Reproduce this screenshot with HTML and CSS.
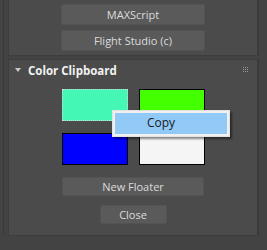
FILE: index.html
```html
<!DOCTYPE html>
<html lang="en">
<head>
    <meta charset="UTF-8">
    <title>Color Clipboard</title>
    <link rel="stylesheet" href="styles.css">
</head>
<body>
    <div class="frame">
        <div class="rollout first">
            <button class="btn wide">MAXScript</button>
            <button class="btn wide">Flight Studio (c)</button>
        </div>

        <div class="rollout">
            <div class="rollout-head">
                <span class="arrow"></span>
                <span class="title">Color Clipboard</span>
                <svg class="grip" width="6" height="6" viewBox="0 0 6 6">
                    <rect x="0" y="0" width="1" height="1"/><rect x="2" y="0" width="1" height="1"/><rect x="4" y="0" width="1" height="1"/>
                    <rect x="0" y="2" width="1" height="1"/><rect x="2" y="2" width="1" height="1"/><rect x="4" y="2" width="1" height="1"/>
                    <rect x="0" y="4" width="1" height="1"/><rect x="2" y="4" width="1" height="1"/><rect x="4" y="4" width="1" height="1"/>
                </svg>
            </div>
            <div class="swatches">
                <div class="swatch focused" style="background:#44f7b4"></div>
                <div class="swatch" style="background:#44ff00"></div>
                <div class="swatch" style="background:#0000ff"></div>
                <div class="swatch" style="background:#f5f5f5"></div>
            </div>
            <button class="btn floater">New Floater</button>
            <button class="btn close">Close</button>
        </div>
    </div>

    <div class="menu">
        <div class="menu-item">Copy</div>
    </div>
</body>
</html>
```

FILE: styles.css
```css
body {
    margin: 0;
    background: #434343;
    font-family: "Open Sans", "Noto Sans", sans-serif;
    font-size: 11px;
    color: #dcdcdc;
    height: 250px;
    overflow: hidden;
}
.frame {
    margin-left: 3px;
    border-left: 1px solid #393939;
    padding: 0 4px 0 4px;
    width: 251px;
}
.rollout {
    background: #4b4b4b;
    border: 1px solid #3d3d3d;
    border-right: 2px solid #3a3a3a;
    display: flex;
    flex-direction: column;
    align-items: center;
    margin-top: 3px;
    padding-bottom: 11px;
}
.rollout.first {
    margin-top: 0;
    border-top: none;
    padding-top: 4px;
    padding-bottom: 4px;
}
.btn {
    font-family: inherit;
    font-size: 11px;
    color: #dcdcdc;
    background: #5a5a5a;
    border: 1px solid #535353;
    border-radius: 2px;
    padding: 0;
    height: 21px;
    box-sizing: border-box;
}
.btn.wide {
    width: 144px;
    margin-bottom: 5px;
}
.btn.wide:last-child {
    margin-bottom: 0;
}
.rollout-head {
    align-self: stretch;
    display: flex;
    align-items: center;
    height: 20px;
    padding: 0 8px 0 6px;
}
.arrow {
    width: 0;
    height: 0;
    border-left: 3px solid transparent;
    border-right: 3px solid transparent;
    border-top: 4px solid #c8c8c8;
    margin-right: 7px;
}
.title {
    font-weight: bold;
    font-size: 11.5px;
    color: #f2f2f2;
    flex: 1;
}
.grip {
    fill: #9a9a9a;
}
.swatches {
    display: grid;
    grid-template-columns: 66px 66px;
    grid-auto-rows: 32px;
    column-gap: 11px;
    row-gap: 12px;
    margin-top: 9px;
    margin-left: 1px;
}
.swatch {
    border: 1px solid #000;
}
.swatch.focused {
    border: 1px dotted #d8d8d8;
}
.btn.floater {
    width: 142px;
    height: 19px;
    margin-top: 12px;
}
.btn.close {
    width: 67px;
    height: 19px;
    margin-top: 9px;
}
.menu {
    position: absolute;
    left: 112px;
    top: 110px;
    width: 112px;
    height: 21px;
    background: #f0f0f0;
    border: 1px solid #e2e2e2;
    padding: 2px;
    box-shadow: 2px 2px 2px rgba(0, 0, 0, 0.45);
}
.menu-item {
    background: #91c9f7;
    height: 21px;
    line-height: 20px;
    padding-left: 32px;
    font-size: 12px;
    color: #1a1a1a;
}
```
